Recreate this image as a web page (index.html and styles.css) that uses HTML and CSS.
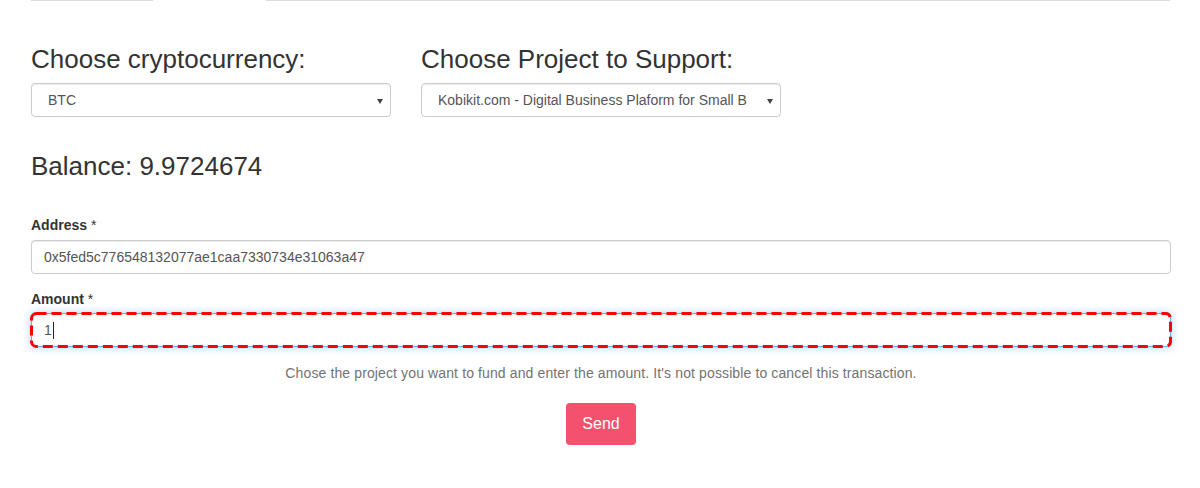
FILE: index.html
```html
<!DOCTYPE html>
<html lang="en">
<head>
<meta charset="utf-8">
<title>Fund project</title>
<link rel="stylesheet" href="styles.css">
</head>
<body>
<div class="page">
  <div class="tabline">
    <div class="seg seg-a"></div>
    <div class="seg-gap"></div>
    <div class="seg seg-b"></div>
  </div>

  <div class="choose-row">
    <div class="choose-col">
      <h2 class="heading">Choose cryptocurrency:</h2>
      <div class="select"><span class="select-text">BTC</span><span class="caret-down"></span></div>
    </div>
    <div class="choose-col">
      <h2 class="heading">Choose Project to Support:</h2>
      <div class="select"><span class="select-text">Kobikit.com - Digital Business Plaform for Small B</span><span class="caret-down"></span></div>
    </div>
  </div>

  <h2 class="balance">Balance: 9.9724674</h2>

  <div class="field field-address">
    <div class="label"><b>Address</b> *</div>
    <div class="input">0x5fed5c776548132077ae1caa7330734e31063a47</div>
  </div>

  <div class="field field-amount">
    <div class="label"><b>Amount</b> *</div>
    <div class="input input-focus">1<span class="text-caret"></span>
      <svg class="focus-ring" aria-hidden="true"><rect class="focus-rect" x="1.5" y="1.5" rx="5" ry="5"></rect></svg>
    </div>
  </div>

  <p class="help">Chose the project you want to fund and enter the amount. It's not possible to cancel this transaction.</p>

  <div class="actions"><button class="btn-send" type="button">Send</button></div>
</div>
</body>
</html>
```

FILE: styles.css
```css
* { box-sizing: border-box; }
html, body { margin: 0; padding: 0; background: #fff; }
body {
  font-family: "Liberation Sans", Arial, Helvetica, sans-serif;
  color: #333;
  font-size: 14px;
}
.page {
  width: 1200px;
  padding: 0 29px 0 31px;
}
.tabline {
  display: flex;
  height: 1px;
}
.seg { height: 1px; background: #dddddd; }
.seg-a { width: 122px; }
.seg-gap { width: 113px; }
.seg-b { width: 904px; }

.choose-row {
  display: flex;
  gap: 30px;
  margin-top: 43px;
}
.choose-col { width: 360px; }
.heading, .balance {
  font-size: 26px;
  line-height: 30px;
  font-weight: normal;
  margin: 0;
  color: #333;
}
.heading { margin-bottom: 9px; }
.select {
  position: relative;
  height: 34px;
  border: 1px solid #ccc;
  border-radius: 4px;
  padding: 0 24px 0 16px;
  display: flex;
  align-items: center;
  color: #555;
  font-size: 14px;
  white-space: nowrap;
  overflow: hidden;
  box-shadow: inset 0 1px 1px rgba(0,0,0,.075);
}
.caret-down {
  position: absolute;
  right: 7px;
  top: 15px;
  width: 0;
  height: 0;
  border-left: 3px solid transparent;
  border-right: 3px solid transparent;
  border-top: 5px solid #444;
}
.balance { margin-top: 34px; }

.field-address { margin-top: 34px; }
.field-amount { margin-top: 15px; }
.label {
  font-size: 14px;
  line-height: 20px;
  color: #333;
  margin-bottom: 5px;
}
.field-amount .label { margin-bottom: 4px; }
.label b { font-weight: bold; }
.input {
  position: relative;
  height: 34px;
  border: 1px solid #ccc;
  border-radius: 4px;
  padding: 0 12px;
  display: flex;
  align-items: center;
  font-size: 14px;
  color: #555;
  box-shadow: inset 0 1px 1px rgba(0,0,0,.075);
}
.input-focus {
  border-color: #66afe9;
  box-shadow: inset 0 1px 1px rgba(0,0,0,.075), 0 0 8px rgba(102,175,233,.6);
}
.focus-ring {
  position: absolute;
  left: -2px;
  top: -2px;
  width: calc(100% + 4px);
  height: calc(100% + 4px);
  overflow: visible;
  pointer-events: none;
}
.focus-rect {
  width: calc(100% - 3px);
  height: calc(100% - 3px);
  fill: none;
  stroke: #ff0000;
  stroke-width: 3;
  stroke-dasharray: 10 5;
}
.text-caret {
  display: inline-block;
  width: 0;
  height: 17px;
  border-left: 1px solid #222;
  margin-left: 1px;
}
.help {
  margin: 16px 0 0;
  text-align: center;
  font-size: 14px;
  line-height: 20px;
  letter-spacing: 0.12px;
  color: #737373;
}
.actions {
  display: flex;
  justify-content: center;
  margin-top: 20px;
}
.btn-send {
  font-family: "Liberation Sans", Arial, sans-serif;
  font-size: 16px;
  line-height: 22px;
  padding: 10px 16px;
  border: 0;
  border-radius: 4px;
  background: #f4516c;
  color: #fff;
  cursor: pointer;
}
```
